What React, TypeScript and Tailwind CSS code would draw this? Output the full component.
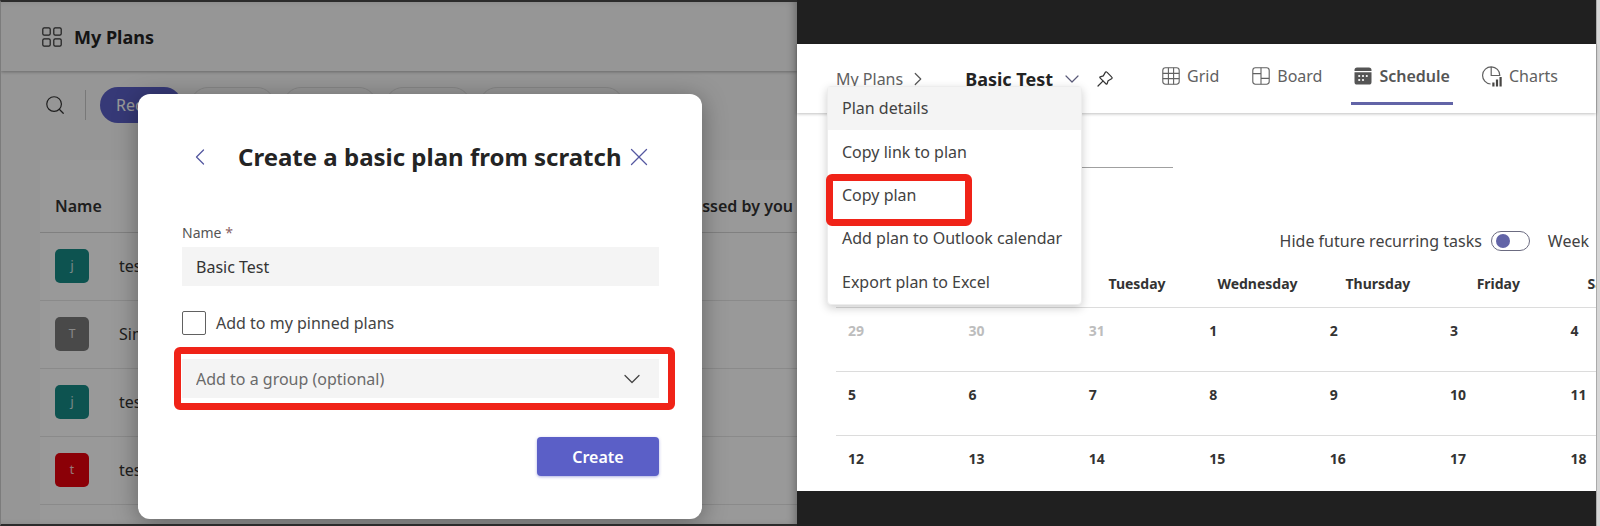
import { ChevronDown, ChevronLeft, ChevronRight, Search, X } from "lucide-react";

const plans = [
  { initial: "j", color: "bg-[#178a86]", name: "test" },
  { initial: "T", color: "bg-[#7a7a7a]", name: "Simple" },
  { initial: "j", color: "bg-[#178a86]", name: "test" },
  { initial: "t", color: "bg-[#e8000d]", name: "test" },
];

const pillWidths = ["w-[85px]", "w-[94px]", "w-[86px]", "w-[145px]"];

const weekdays = ["", "", "Tuesday", "Wednesday", "Thursday", "Friday", "Saturday"];

const weeks = [
  [29, 30, 31, 1, 2, 3, 4],
  [5, 6, 7, 8, 9, 10, 11],
  [12, 13, 14, 15, 16, 17, 18],
];

function AppsIcon() {
  return (
    <svg width="20" height="20" viewBox="0 0 20 20" fill="none" stroke="#333" strokeWidth="1.2" aria-hidden="true">
      <rect x="0.8" y="0.8" width="7.4" height="7.4" rx="1.4" />
      <rect x="11.8" y="0.8" width="7.4" height="7.4" rx="1.4" />
      <rect x="0.8" y="11.8" width="7.4" height="7.4" rx="1.4" />
      <rect x="11.8" y="11.8" width="7.4" height="7.4" rx="1.4" />
    </svg>
  );
}

function PinIcon() {
  return (
    <svg width="16" height="16" viewBox="0 0 16 16" fill="none" stroke="#333" strokeWidth="1.2" strokeLinejoin="round" strokeLinecap="round" aria-hidden="true">
      <path d="M9.9 1.2a1 1 0 0 0-1.6.2L6.3 4.9 3.2 5.9a.6.6 0 0 0-.2 1l6.1 6.1a.6.6 0 0 0 1-.2l1-3.1 3.5-2a1 1 0 0 0 .2-1.6z" />
      <path d="M5.9 10.1 1 15" />
    </svg>
  );
}

function GridIcon() {
  return (
    <svg width="18" height="18" viewBox="0 0 18 18" fill="none" stroke="#616161" strokeWidth="1.1" aria-hidden="true">
      <rect x="0.8" y="0.8" width="16.4" height="16.4" rx="2.6" />
      <path d="M6.4.8v16.4M11.6.8v16.4M.8 6.4h16.4M.8 11.6h16.4" />
    </svg>
  );
}

function BoardIcon() {
  return (
    <svg width="18" height="18" viewBox="0 0 18 18" fill="none" stroke="#616161" strokeWidth="1.1" aria-hidden="true">
      <rect x="0.8" y="0.8" width="16.4" height="16.4" rx="2.6" />
      <path d="M9 .8v16.4M.8 6.6H9M9 11.4h8.2" />
    </svg>
  );
}

function ScheduleIcon() {
  return (
    <svg width="18" height="18" viewBox="0 0 18 18" fill="#555" aria-hidden="true">
      <path d="M.5 4V3A2.6 2.6 0 0 1 3.1.4h11.8A2.6 2.6 0 0 1 17.5 3v1z" />
      <path d="M.5 5.2h17v9.7a2.6 2.6 0 0 1-2.6 2.6H3.1A2.6 2.6 0 0 1 .5 14.9z" />
      <g fill="#fff">
        <circle cx="5.2" cy="9" r="1.1" />
        <circle cx="9" cy="9" r="1.1" />
        <circle cx="12.8" cy="9" r="1.1" />
        <circle cx="5.2" cy="13" r="1.1" />
        <circle cx="9" cy="13" r="1.1" />
      </g>
    </svg>
  );
}

function ChartsIcon() {
  return (
    <svg width="20" height="21" viewBox="0 0 20 21" fill="none" stroke="#616161" strokeWidth="1.2" aria-hidden="true">
      <path d="M8.6 18A8.6 8.6 0 1 1 17.8 9.5H9.2V.8" />
      <path d="M11.4 16.5v4M15 13.5v7M18.6 11v9.5" stroke="#484644" strokeWidth="2.2" />
    </svg>
  );
}

function PlansPage() {
  return (
    <section className="relative flex flex-col overflow-hidden border-y-2 border-l border-y-[#2b2b2b] border-l-[#7c7c7c] bg-[#fafafa]">
      <header className="flex h-[69px] items-center gap-3 bg-[#fbfbfb] pl-[41px] shadow-[0_1px_3px_rgba(0,0,0,0.3)]">
        <AppsIcon />
        <h1 className="text-lg font-bold text-[#242424]">My Plans</h1>
      </header>

      <div className="flex h-[67px] items-center pl-[43px]">
        <button type="button" aria-label="Search">
          <Search size={22} strokeWidth={1.3} color="#333" />
        </button>
        <div className="mr-[14px] ml-[19px] h-[30px] w-px bg-[#c8c8c8]" />
        <div className="flex gap-2">
          <button type="button" className="h-9 w-[82px] rounded-full bg-[#5b5fc7] pl-4 text-left text-base text-white">
            Recent
          </button>
          {pillWidths.map((width) => (
            <span key={width} className={`h-9 rounded-full border border-[#e0e0e0] ${width}`} />
          ))}
        </div>
      </div>

      <div className="mt-[22px] ml-[39px] flex-1 bg-white">
        <table className="w-full border-collapse text-left text-base text-[#333]">
          <thead>
            <tr className="h-[72px] border-b border-[#d6d6d6]">
              <th className="w-16 pt-5 pl-[15px] font-semibold">Name</th>
              <th />
              <th className="pt-5 pr-1 text-right font-semibold">Last accessed by you</th>
            </tr>
          </thead>
          <tbody>
            {plans.map((plan, index) => (
              <tr key={index} className="h-[68px] border-b border-[#e6e6e6]">
                <td className="pl-[15px]">
                  <div className={`flex size-[34px] items-center justify-center rounded-[5px] text-xs text-white/80 ${plan.color}`}>
                    {plan.initial}
                  </div>
                </td>
                <td className="pl-[15px]">{plan.name}</td>
                <td />
              </tr>
            ))}
          </tbody>
        </table>
      </div>

      <div className="absolute inset-0 overflow-hidden bg-black/40 pt-[92px] pl-[137px] shadow-[inset_-6px_0_8px_-4px_rgba(0,0,0,0.3)]">
        <CreatePlanDialog />
      </div>
    </section>
  );
}

function CreatePlanDialog() {
  return (
    <div
      role="dialog"
      aria-labelledby="dialog-title"
      className="flex w-[564px] flex-col rounded-xl bg-white px-11 pt-[43px] pb-[43px] text-[#333] shadow-[0_4px_24px_rgba(0,0,0,0.35)]"
    >
      <div className="flex h-10 items-center pl-1">
        <button type="button" aria-label="Back">
          <ChevronLeft size={28} strokeWidth={1.1} color="#5558a0" />
        </button>
        <h2 id="dialog-title" className="ml-6 text-2xl font-bold whitespace-nowrap text-[#242424]">
          Create a basic plan from scratch
        </h2>
        <button type="button" aria-label="Close" className="ml-[2px]">
          <X size={30} strokeWidth={1} color="#5558a0" />
        </button>
      </div>

      <label htmlFor="plan-name" className="mt-[45px] text-sm leading-[22px] text-[#555]">
        Name <span className="text-[#8a6464]">*</span>
      </label>
      <input
        id="plan-name"
        defaultValue="Basic Test"
        className="mt-[3px] h-[39px] w-[477px] bg-[#f4f4f4] px-[14px] text-base outline-none"
      />

      <div className="mt-[25px] flex items-center gap-[10px]">
        <input id="pinned" type="checkbox" className="size-6 appearance-none rounded-xs border border-[#616161]" />
        <label htmlFor="pinned" className="text-base leading-6 text-[#444]">
          Add to my pinned plans
        </label>
      </div>

      <div className="mt-3 -ml-2 w-[501px] rounded-md border-[7px] border-[#f02318] py-[5px] pr-[9px] pl-px">
        <div className="relative">
          <select
            aria-label="Add to a group (optional)"
            className="block h-[39px] w-full appearance-none bg-[#f4f4f4] px-[14px] text-base text-[#6a6a6a] outline-none"
          >
            <option>Add to a group (optional)</option>
          </select>
          <ChevronDown size={28} strokeWidth={1.1} color="#444" className="pointer-events-none absolute top-[6px] right-[13px]" />
        </div>
      </div>

      <button
        type="button"
        className="mt-[27px] ml-[355px] h-[39px] w-[122px] rounded bg-[#5b5fc7] text-base font-semibold text-white shadow-[0_1px_3px_rgba(91,95,199,0.5)]"
      >
        Create
      </button>
    </div>
  );
}

function PlanMenu() {
  const item = "relative flex items-center pb-px pl-[14px] text-base text-[#424242]";
  return (
    <div
      role="menu"
      className="absolute top-[42px] left-[30px] z-10 grid h-[219px] w-[255px] grid-rows-5 rounded-sm border border-[#ededed] bg-white shadow-[0_3px_10px_rgba(0,0,0,0.2)]"
    >
      <button type="button" role="menuitem" className={`${item} bg-[#f4f4f4]`}>Plan details</button>
      <button type="button" role="menuitem" className={item}>Copy link to plan</button>
      <button type="button" role="menuitem" className={item}>
        Copy plan
        <span className="absolute top-0 -left-[2px] h-[52px] w-[146px] rounded-md border-[7px] border-[#f02318]" />
      </button>
      <button type="button" role="menuitem" className={item}>Add plan to Outlook calendar</button>
      <button type="button" role="menuitem" className={item}>Export plan to Excel</button>
    </div>
  );
}

function SchedulePage() {
  const tab = "flex h-[30px] items-center gap-[7px] text-base";
  return (
    <section className="flex min-w-0 flex-col bg-[#202020] pt-11 pb-[35px]">
      <div className="relative flex-1 bg-white">
        <header className="flex h-[69px] pl-[39px] shadow-[0_1px_3px_rgba(0,0,0,0.25)]">
          <div className="flex h-[69px] items-center">
            <a href="#plans" className="text-base text-[#616161]">My Plans</a>
            <ChevronRight size={22} strokeWidth={1.3} color="#555" className="ml-1" />
            <h2 className="ml-9 text-lg font-bold whitespace-nowrap text-[#242424]">Basic Test</h2>
            <ChevronDown size={24} strokeWidth={1.2} color="#5a5a78" className="mr-[13px] ml-[7px]" />
            <button type="button" aria-label="Pin"><PinIcon /></button>
          </div>
          <nav className="ml-[49px] flex gap-[33px] pt-[17px] text-[#616161]">
            <a href="#grid" className={tab}><GridIcon />Grid</a>
            <a href="#board" className={tab}><BoardIcon />Board</a>
            <a href="#schedule" className="-mx-1 flex h-[44px] border-b-3 border-[#6264a7] px-[3px]">
              <span className={`${tab} font-semibold text-[#555]`}><ScheduleIcon />Schedule</span>
            </a>
            <a href="#charts" className={tab}><ChartsIcon />Charts</a>
          </nav>
        </header>

        <PlanMenu />

        <div className="ml-[39px] h-[55px] w-[337px] border-b border-[#a0a0a0]" />

        <div className="mt-[61px] flex h-6 items-center justify-end gap-[9px] pr-[7px] text-base text-[#424242]">
          <label htmlFor="hide-recurring">Hide future recurring tasks</label>
          <input
            id="hide-recurring"
            type="checkbox"
            role="switch"
            className="h-5 w-[39px] appearance-none rounded-full border border-[#6b6b80] p-[2px] pl-1 before:block before:size-[14px] before:rounded-full before:bg-[#6264a7]"
          />
          <span className="ml-[9px]">Week</span>
        </div>

        <div className="mt-[10px] overflow-hidden pl-[39px]">
          <table className="w-[843px] table-fixed border-collapse text-sm font-bold text-[#333]">
            <thead>
              <tr className="h-[44px]">
                {weekdays.map((day, index) => <th key={index} className="pb-px">{day}</th>)}
              </tr>
            </thead>
            <tbody>
              {weeks.map((week) => (
                <tr key={week[0]} className="h-16 border-t border-[#dcdcdc] last:h-[55px]">
                  {week.map((day) => (
                    <td key={day} className={`pt-[13px] pl-3 align-top ${day > 28 ? "text-[#bdbdbd]" : ""}`}>{day}</td>
                  ))}
                </tr>
              ))}
            </tbody>
          </table>
        </div>
      </div>
    </section>
  );
}

export default function App() {
  return (
    <main className="grid min-h-screen grid-cols-[797fr_799fr_4px] overflow-hidden bg-[#d6d6d6] font-['Segoe_UI','Noto_Sans',sans-serif]">
      <PlansPage />
      <SchedulePage />
      <div className="border-l border-[#aaa]" />
    </main>
  );
}
